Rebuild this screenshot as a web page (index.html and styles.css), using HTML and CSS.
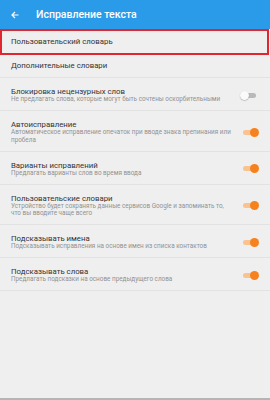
FILE: index.html
```html
<!DOCTYPE html>
<html lang="ru">
<head>
<meta charset="utf-8">
<link rel="stylesheet" href="styles.css">
</head>
<body>
<div class="app">
  <header class="bar">
    <svg class="back" width="8" height="8" viewBox="0 0 8 8"><path d="M7.5 4H1M4 1L1 4l3 3" fill="none" stroke="#fff" stroke-width="1.2"/></svg>
    <span class="bar-title">Исправление текста</span>
  </header>
  <div class="list">
    <div class="item simple selected">Пользовательский словарь</div>
    <div class="item simple">Дополнительные словари</div>
    <div class="item">
      <div class="txt"><div class="t">Блокировка нецензурных слов</div><div class="s">Не предлагать слова, которые могут быть сочтены оскорбительными</div></div>
      <span class="sw off"></span>
    </div>
    <div class="item">
      <div class="txt"><div class="t">Автоисправление</div><div class="s">Автоматическое исправление опечаток при вводе знака препинания или пробела</div></div>
      <span class="sw on"></span>
    </div>
    <div class="item">
      <div class="txt"><div class="t">Варианты исправлений</div><div class="s">Предлагать варианты слов во время ввода</div></div>
      <span class="sw on"></span>
    </div>
    <div class="item">
      <div class="txt"><div class="t">Пользовательские словари</div><div class="s">Устройство будет сохранять данные сервисов Google и запоминать то, что вы вводите чаще всего</div></div>
      <span class="sw on"></span>
    </div>
    <div class="item">
      <div class="txt"><div class="t">Подсказывать имена</div><div class="s">Подсказывать исправления на основе имен из списка контактов</div></div>
      <span class="sw on"></span>
    </div>
    <div class="item">
      <div class="txt"><div class="t">Подсказывать слова</div><div class="s">Предлагать подсказки на основе предыдущего слова</div></div>
      <span class="sw on"></span>
    </div>
  </div>
</div>
</body>
</html>
```

FILE: styles.css
```css
* { box-sizing: border-box; }
html, body { margin: 0; padding: 0; }
body {
  width: 270px;
  height: 400px;
  background: #efefef;
  font-family: Roboto, "Noto Sans", sans-serif;
  overflow: hidden;
}
.app {
  height: 400px;
  border-bottom: 2px solid #b5b5b5;
  display: flex;
  flex-direction: column;
}
.bar {
  height: 29px;
  background: #2a9be9;
  display: flex;
  align-items: center;
  padding-left: 11px;
}
.back { display: block; margin-right: 17px; }
.bar-title {
  color: #fff;
  font-size: 10.5px;
  font-weight: 500;
}
.list { padding-top: 1px; }
.item {
  display: flex;
  align-items: center;
  padding: 9px 14px 6.5px 11px;
  border-bottom: 1px solid #e2e2e2;
}
.item.simple {
  height: 24px;
  padding: 0 11px;
  font-size: 7.8px;
  color: #333;
}
.item.selected {
  outline: 2px solid #e0262e;
  outline-offset: -1px;
  margin: 0 2px 0 1px;
  padding-left: 10px;
}
.txt { flex: 1; min-width: 0; padding-right: 12px; }
.t { font-size: 7.8px; line-height: 10px; color: #333; }
.s { font-size: 6.35px; line-height: 7.5px; color: #929292; margin-top: -1px; }
.sw {
  position: relative;
  width: 13px;
  height: 5px;
  border-radius: 3px;
  flex: none;
}
.sw::after {
  content: "";
  position: absolute;
  top: -2px;
  width: 9px;
  height: 9px;
  border-radius: 50%;
}
.sw.on { background: #f9c28f; }
.sw.on::after { right: -3px; background: #f6821f; }
.sw.off { background: #b9b9b9; }
.sw.off::after { left: -3px; background: #fafafa; box-shadow: 0 0.5px 1px rgba(0,0,0,0.35); }
```
